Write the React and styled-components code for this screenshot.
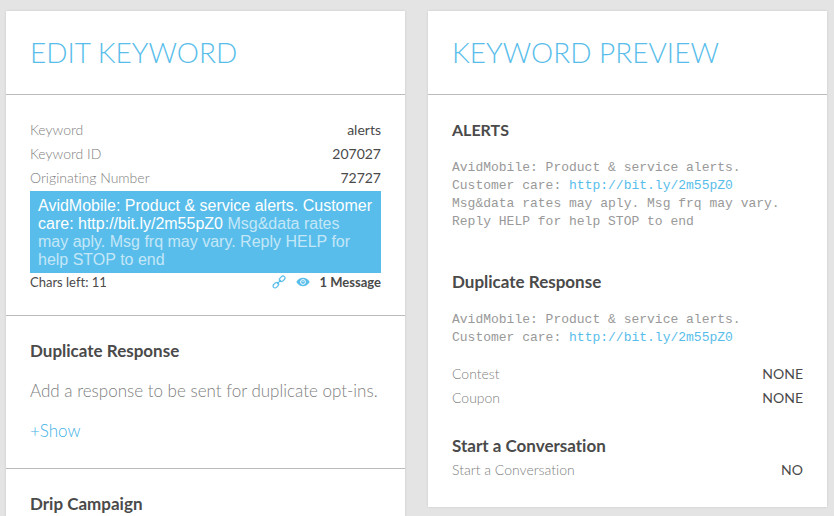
import React, { useState } from 'react';
import styled, { createGlobalStyle } from "styled-components";

const GlobalStyle = createGlobalStyle`
    *{
        box-sizing: border-box;
    }
    body{
        margin: 0;
        background-color: #E4E4E4;
        color: #4A4A4A;
        font-family: Lato, "Open Sans", sans-serif;
        font-size: 14px;
        font-variant-ligatures: none;
        line-height: 22px;
    }
`

const Page = styled.main`
    display: grid;
    grid-template-columns: 1fr 1fr;
    align-items: start;
    gap: 23px;
    padding: 11px 7px 9px 6px;
`

const Card = styled.section`
    min-width: 0;
    background-color: #FFFFFF;
    box-shadow: 0 0 2px #C8C8C8;
`

const CardHeader = styled.header`
    padding: 24px;
    border-bottom: 1px solid #BBBBBB;
`

const CardTitle = styled.h1`
    margin: 0;
    color: #58BDEA;
    font-size: 28px;
    font-weight: 300;
    line-height: 35px;
    text-transform: uppercase;
`

const Block = styled.div`
    padding: 24px;
    &:not(:last-child){
        border-bottom: 1px solid #BBBBBB;
    }
`

const Subtitle = styled.h2`
    margin: 0;
    padding: ${props => props.$space || 0}px 0 2px;
    font-size: ${props => props.$keyword ? '16px' : '17px'};
    font-weight: 700;
    line-height: 22px;
`

const DataList = styled.dl`
    margin: ${props => props.$spaced ? '16px' : '0'} 0 0;
`

const DataRow = styled.div`
    display: flex;
    justify-content: space-between;
    padding-bottom: 2px;
    dt{
        color: #808080;
        font-weight: 300;
    }
    dd{
        margin: 0;
    }
`

const MessageBox = styled.div`
    padding: 6px 7px 4px 8px;
    background-color: #58BDEA;
    color: #FFFFFF;
    font-family: "Liberation Sans", Arial, sans-serif;
    font-size: 16px;
    line-height: 18px;
    outline: none;
`

const Suffix = styled.span`
    color: #C4E7F8;
`

const MessageFooter = styled.div`
    display: flex;
    justify-content: space-between;
    font-size: 13px;
    line-height: 18px;
`

const Tools = styled.div`
    display: flex;
    align-items: center;
    gap: 10px;
`

const IconButton = styled.button`
    display: flex;
    padding: 0;
    border: 0;
    background: none;
    color: #58BDEA;
    cursor: pointer;
`

const Hint = styled.p`
    margin: 16px 0;
    padding-bottom: 2px;
    color: #808080;
    font-size: 17px;
    font-weight: 300;
`

const ShowButton = styled.button`
    display: block;
    padding: 0 0 2px;
    border: 0;
    background: none;
    color: #3FB2E6;
    font: inherit;
    font-size: 17px;
    font-weight: 300;
    cursor: pointer;
`

const Sms = styled.p`
    margin: 16px 0 0;
    color: #999999;
    font-family: "Liberation Mono", "Courier New", monospace;
    font-size: 13px;
    line-height: 18px;
    a{
        color: #58BDEA;
        text-decoration: none;
    }
`

const LinkIcon = () => (
    <svg width="14" height="14" viewBox="0 0 14 14" fill="none" stroke="currentColor" strokeWidth="1.2">
        <g transform="rotate(-45 7 7)">
            <rect x="-0.6" y="5" width="6.4" height="4" rx="2" />
            <rect x="8.2" y="5" width="6.4" height="4" rx="2" />
            <path d="M4 7h6" />
        </g>
    </svg>
)

const EyeIcon = () => (
    <svg width="14" height="14" viewBox="0 0 14 14">
        <path d="M0.3 7C2 4.2 4.4 2.8 7 2.8S12 4.2 13.7 7C12 9.8 9.6 11.2 7 11.2S2 9.8 0.3 7z" fill="currentColor" />
        <circle cx="7" cy="7" r="2.4" fill="none" stroke="#FFFFFF" strokeWidth="1" />
        <circle cx="7" cy="6.6" r="0.7" fill="#FFFFFF" />
    </svg>
)

const Row = ({ label, value }) => (
    <DataRow>
        <dt>{ label }</dt>
        <dd>{ value }</dd>
    </DataRow>
)

const BitLink = () => <a href="http://bit.ly/2m55pZ0">http://bit.ly/2m55pZ0</a>

const EditKeyword = () => {
    const [opened, setOpened] = useState(false);

    return (
        <Card>
            <CardHeader>
                <CardTitle>Edit Keyword</CardTitle>
            </CardHeader>
            <Block>
                <DataList>
                    <Row label="Keyword" value="alerts" />
                    <Row label="Keyword ID" value="207027" />
                    <Row label="Originating Number" value="72727" />
                </DataList>
                <MessageBox role="textbox" aria-label="Message" aria-multiline="true" contentEditable suppressContentEditableWarning spellCheck={false}>
                    AvidMobile: Product &amp; service alerts. Customer care: http://bit.ly/2m55pZ0{' '}
                    <Suffix contentEditable={false}>Msg&amp;data rates may aply. Msg frq may vary. Reply HELP for help STOP to end</Suffix>
                </MessageBox>
                <MessageFooter>
                    <span>Chars left: 11</span>
                    <Tools>
                        <IconButton type="button" aria-label="Insert link"><LinkIcon /></IconButton>
                        <IconButton type="button" aria-label="Preview"><EyeIcon /></IconButton>
                        <strong>1 Message</strong>
                    </Tools>
                </MessageFooter>
            </Block>
            <Block>
                <Subtitle>Duplicate Response</Subtitle>
                <Hint>Add a response to be sent for duplicate opt-ins.</Hint>
                <ShowButton type="button" aria-expanded={opened} onClick={() => setOpened(!opened)}>{ opened ? '-Hide' : '+Show' }</ShowButton>
            </Block>
            <Block>
                <Subtitle>Drip Campaign</Subtitle>
            </Block>
        </Card>
    )
}

const KeywordPreview = () => (
    <Card>
        <CardHeader>
            <CardTitle>Keyword Preview</CardTitle>
        </CardHeader>
        <Block>
            <Subtitle $keyword>ALERTS</Subtitle>
            <Sms>
                AvidMobile: Product &amp; service alerts. Customer care: <BitLink /><br />
                Msg&amp;data rates may aply. Msg frq may vary. Reply HELP for help STOP to end
            </Sms>
            <Subtitle $space={40}>Duplicate Response</Subtitle>
            <Sms>
                AvidMobile: Product &amp; service alerts. Customer care: <BitLink />
            </Sms>
            <DataList $spaced>
                <Row label="Contest" value="NONE" />
                <Row label="Coupon" value="NONE" />
            </DataList>
            <Subtitle $space={24}>Start a Conversation</Subtitle>
            <DataList>
                <Row label="Start a Conversation" value="NO" />
            </DataList>
        </Block>
    </Card>
)

const App = () => {
    return (
        <>
            <GlobalStyle />
            <Page>
                <EditKeyword />
                <KeywordPreview />
            </Page>
        </>
    )
}

export default App;
